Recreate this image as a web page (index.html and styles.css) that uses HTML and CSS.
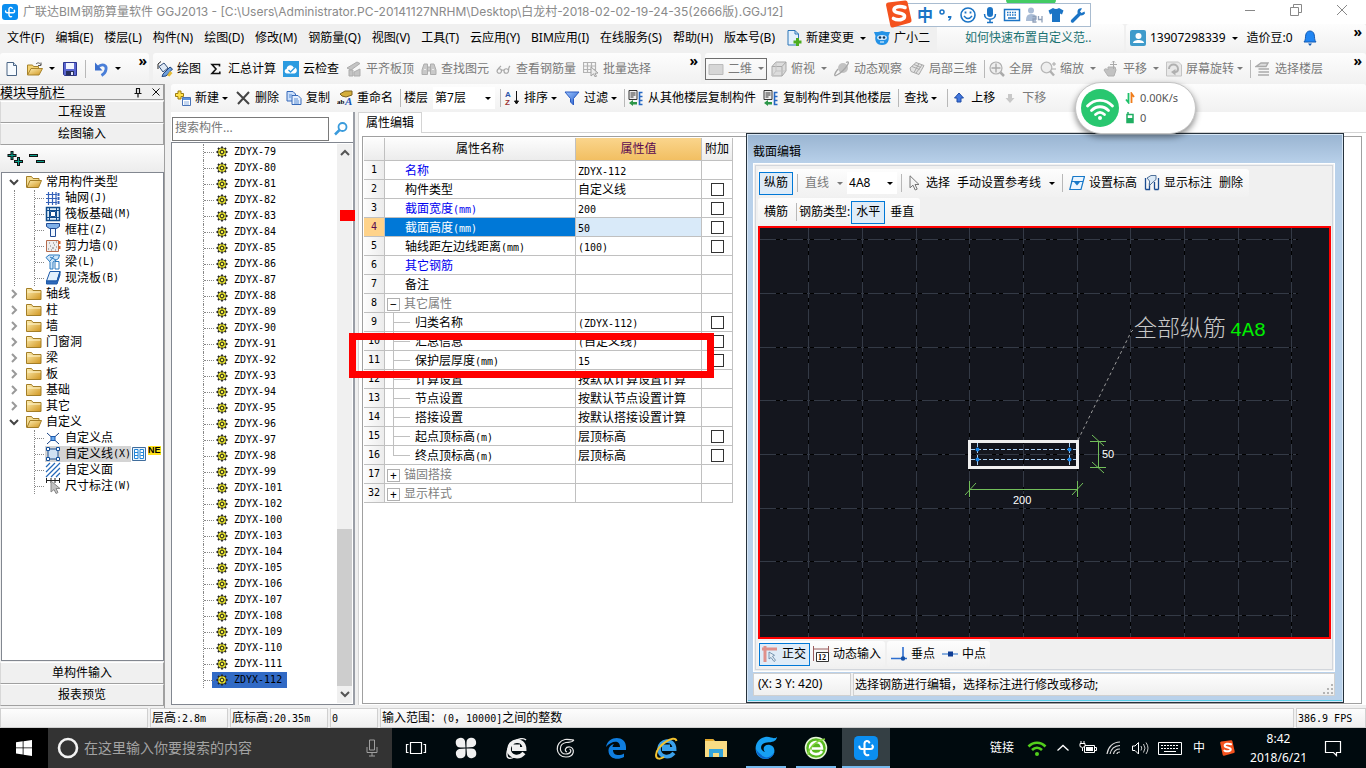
FILE: index.html
```html
<!DOCTYPE html>
<html lang="zh-CN">
<head>
<meta charset="utf-8">
<title>广联达BIM钢筋算量软件 GGJ2013</title>
<link rel="stylesheet" href="styles.css">
</head>
<body>
<svg class="sprite" aria-hidden="true">
  <defs>
    <linearGradient id="gold" x1="0" y1="0" x2="1" y2="1"><stop offset="0" stop-color="#fff0b4"/><stop offset="1" stop-color="#d0951f"/></linearGradient>
    <linearGradient id="blue" x1="0" y1="0" x2="1" y2="1"><stop offset="0" stop-color="#9fc6ff"/><stop offset="1" stop-color="#1c56c8"/></linearGradient>
  </defs>
  <symbol id="app" viewBox="0 0 16 16"><rect width="16" height="16" rx="3" fill="#0b8ef0"/><path d="M10.200 4.300A1.700 1.700 0 0 0 7 4.800v6.400a2 2 0 0 0 2.600 1.500M3.600 7a1.500 1.500 0 0 0 1.500 1.700h6.200a1.400 1.400 0 0 0 .9-2.400" fill="none" stroke="#fff" stroke-width="1.400" stroke-linecap="round"/></symbol>
  <symbol id="new" viewBox="0 0 16 16"><path d="M3 1.500h6.500l3 3v10H3z" fill="#f7fbff" stroke="#4a6484"/><path d="M9.500 1.500v3h3" fill="#cfe0f4" stroke="#4a6484"/></symbol>
  <symbol id="open" viewBox="0 0 16 16"><path d="M.5 14V4h5l1 1.500h5V8" fill="#f4d272" stroke="#a8842c"/><path d="M.5 14 4 7.500h11.500L12 14z" fill="url(#gold)" stroke="#a8842c"/><path d="M9 3c2-2 4-1 5 1m0-2.500V4.500h-3" fill="none" stroke="#555"/></symbol>
  <symbol id="save" viewBox="0 0 16 16"><path d="M1.500 1.500h13v13h-12l-1-1z" fill="#5a66d0" stroke="#2d3590"/><path d="M4 2h8v6H4z" fill="#f2f5ff"/><path d="M4 10h8v4.500H4z" fill="#28305c"/><path d="M9 11h2v3H9z" fill="#dfe4ff"/></symbol>
  <symbol id="undo" viewBox="0 0 16 16"><path d="M5 6c4-4 9-2 8 2.500-.4 2.500-2 4.500-4.500 6" fill="none" stroke="#4a7fd8" stroke-width="2.800"/><path d="M2 1.500v8h7.500z" fill="#3b6fce"/></symbol>
  <symbol id="paint" viewBox="0 0 16 16"><path d="M2 5.500 7 2l4 5-5 4z" fill="#dfe9f5" stroke="#33507c"/><path d="M1 8V3l3-2.500" fill="none" stroke="#222"/><path d="m6 13 7-7 2.500 2-6.500 7-4 .5z" fill="#6fa0dc" stroke="#24477f"/><path d="m13 10 2.500 2-3 3.500-2.500-1z" fill="#e5bb34"/></symbol>
  <symbol id="sum" viewBox="0 0 16 16"><path d="M11.500 5.500V3.500H4L8 8l-4 4.500h7.800v-2" fill="none" stroke="#111" stroke-width="1.600"/></symbol>
  <symbol id="cloud" viewBox="0 0 16 16"><path d="M0 0h16v16H0z" fill="#2c9be0"/><path d="M4 12.500c-3-.5-3-4-.4-4.500C4 4 9 3 10.500 6.500c4-.5 4.500 5 1 6z" fill="#fff"/><path d="m5.500 9 2 2 4.500-4.500" fill="none" stroke="#2c9be0" stroke-width="1.300"/></symbol>
  <symbol id="align" viewBox="0 0 16 16"><path d="m1 7 10-6 3 1.500L5 9zM3 9v6h4V9zm5 2v4h6V8z" fill="#c4c4c4" stroke="#adadad"/></symbol>
  <symbol id="bino" viewBox="0 0 16 16"><path d="M1 13.500V9l2-6h3.500v10.500zm8.500 0V3H13l2 6v4.500zM6.500 6h3v4h-3z" fill="#c9c9c9" stroke="#adadad"/><path d="M3 8.500h2M11 8.500h2" stroke="#eee"/></symbol>
  <symbol id="glass" viewBox="0 0 16 16"><path d="M1 10a2.200 2.200 0 1 0 4.500 0A2.200 2.200 0 1 0 1 10c1-3 3-4 4-5M8 10a2.200 2.200 0 1 0 4.500 0A2.200 2.200 0 1 0 8 10M12.500 10c0-3 0-4 1.500-5M5.500 9.500q1.200-1 2.500 0" fill="none" stroke="#a8a8a8" stroke-width="1.200"/></symbol>
  <symbol id="batch" viewBox="0 0 16 16"><path d="M.5 1.500h12v10H.5zM.5 5h12M.5 8.500h12M4.500 1.500v10M8.500 1.500v10" fill="none" stroke="#b3b3b3" stroke-width="1.200"/><path d="m8 6 7 6-3 .3 1.500 3-1.500.5-1.500-3L8 15z" fill="#ededed" stroke="#a0a0a0"/></symbol>
  <symbol id="flat" viewBox="0 0 16 16"><path d="M1 3.500h14v10H1z" fill="#d6d6d6" stroke="#bbb"/></symbol>
  <symbol id="cube" viewBox="0 0 16 16"><path d="M1 5.500 5 1h10v9l-4 5H1z" fill="#dcdcdc" stroke="#a9a9a9"/><path d="M1 5.500h10V15M11 5.500 15 1" fill="none" stroke="#a9a9a9"/><path d="M5 1v9H15M5 10l-4 5" fill="none" stroke="#c4c4c4"/></symbol>
  <symbol id="orbit" viewBox="0 0 16 16"><circle cx="9" cy="7" r="5" fill="#c2c2c2"/><path d="M4 8c-4 5-4 7-2 6.500C6 13 12 7 14 3c1-2 0-2.500-2-1.500" fill="none" stroke="#a6a6a6" stroke-width="1.300"/></symbol>
  <symbol id="part3d" viewBox="0 0 16 16"><path d="M1 7 7 1.500l8 3-5 9-8-3z" fill="#e3e3e3" stroke="#aaa"/><path d="m5 3.500 7 3M3 5.500l7.500 3M10 2.500l-5 9M7 12l6-8" fill="none" stroke="#aaa"/></symbol>
  <symbol id="full" viewBox="0 0 16 16"><circle cx="7" cy="7" r="6" fill="#eee" stroke="#b0b0b0" stroke-width="1.200"/><path d="M7 2.500v9M2.500 7h9" stroke="#aaa" stroke-width="1.400"/><path d="m11.500 11.500 3.500 3.500" stroke="#aaa" stroke-width="2.500"/></symbol>
  <symbol id="zoomi" viewBox="0 0 16 16"><circle cx="6.500" cy="6.500" r="5.300" fill="#eee" stroke="#b8b8b8" stroke-width="1.300"/><path d="m10 10 4 4.500" stroke="#b0b0b0" stroke-width="2.400"/><path d="M12 3h4M14 1v4M12 8h4" stroke="#aaa"/></symbol>
  <symbol id="pan" viewBox="0 0 16 16"><path d="M1 9c1-2 3-1 4 0V6h7l1 3-2 6H5z" fill="#c2c2c2" stroke="#b0b0b0"/><path d="M10.500 0v8M7 3.500h7" stroke="#aaa"/><path d="m9 1.500 1.500-1.500L12 1.500" fill="none" stroke="#aaa"/></symbol>
  <symbol id="rot" viewBox="0 0 16 16"><path d="M.5 1h12l3 3v11H.5z" fill="#e8e8e8" stroke="#c4c4c4"/><path d="M3 8c0-6 9-6 9 0 0 2-1 3-3 3" fill="none" stroke="#b0b0b0" stroke-width="2"/><path d="M9.500 8v6.500L5 11z" fill="#b0b0b0"/></symbol>
  <symbol id="layers" viewBox="0 0 16 16"><path d="M1 5.500 6 2h7l-2 3.500zM3.500 8H14M3.500 11H14M3 14h11" fill="#ddd" stroke="#aaa" stroke-width="1.400"/></symbol>
  <symbol id="addc" viewBox="0 0 16 16"><path d="M3 1h3v2.500h2.500v3H6V9H3V6.500H.5v-3H3z" fill="#ffe14a" stroke="#9b7b10"/><path d="M7.500 7.500h8v8h-8z" fill="#fff" stroke="#4a74b8"/><path d="M8 8h7v2H8z" fill="#5c93e0"/><path d="M9 12h5M9 14h5" stroke="#8aaee0"/></symbol>
  <symbol id="del" viewBox="0 0 16 16"><path d="m2 2 12 12M14 2 3 14" stroke="#454545" stroke-width="2"/></symbol>
  <symbol id="copy" viewBox="0 0 16 16"><path d="M1 1.500h6l2.500 2.500v7H1z" fill="#c9dffc" stroke="#3669b8"/><path d="M6 5.500h6l3 3v6H6z" fill="#e5f0ff" stroke="#3669b8"/><path d="M8 9h4M8 11h5M8 13h5M3 5h3M3 7h2" stroke="#5d8ed2"/></symbol>
  <symbol id="filter" viewBox="0 0 16 16"><path d="M1 2h14l-5.500 6.500V15L6.500 12V8.500z" fill="url(#blue)" stroke="#2a5ac0"/></symbol>
  <symbol id="fcopy" viewBox="0 0 16 16"><path d="M1 .5h8v9H1z" fill="#eee" stroke="#333"/><path d="M2.500 3h5M2.500 5h5M2.500 7h3" stroke="#333"/><path d="M14.500 2.500h-3v12h3M11.500 6.500h3M11.500 10.500h3" fill="none" stroke="#2567c2" stroke-width="1.600"/><path d="m1 13 4-3v2h4v2.500H5V16z" fill="#2c9648"/></symbol>
  <symbol id="up" viewBox="0 0 16 16"><path d="m8 3 4.500 5H10v4H6V8H3.500z" fill="#4377dd" stroke="#1f4ca6"/></symbol>
  <symbol id="down" viewBox="0 0 16 16"><path d="M8 13 3.500 8H6V4h4v4h2.500z" fill="#c8c8c8"/></symbol>
  <symbol id="docadd" viewBox="0 0 16 16"><path d="M2 .5h7l3.500 3.500v11H2z" fill="#e4f1fd" stroke="#2d76b8"/><path d="M9 .5V4h3.500" fill="none" stroke="#2d76b8"/><path d="M10 8h3v2.500h2.500v3H13V16h-3v-2.500H7.500v-3H10z" fill="#4dad1f"/></symbol>
  <symbol id="mascot" viewBox="0 0 16 16"><path d="M0 2h4l4-1 4 1h4l-1.500 4c1 4-.5 9-6.500 9S.5 10 1.500 6z" fill="#2492e6"/><ellipse cx="8" cy="7.500" rx="5" ry="2.600" fill="#cfe9ff"/><circle cx="6" cy="7.500" r="1.300" fill="#17395c"/><circle cx="10" cy="7.500" r="1.300" fill="#17395c"/><path d="M6 12h4" stroke="#fff"/></symbol>
  <symbol id="user" viewBox="0 0 16 16"><rect width="16" height="16" rx="2" fill="#3f9bcb"/><circle cx="8.500" cy="6" r="3" fill="#fff"/><path d="M3 13c0-4 11-4 11 0z" fill="#fff"/></symbol>
  <symbol id="bell" viewBox="0 0 16 16"><path d="M2 12c2-2 1-5 2-8 1-4 7-4 8 0 1 3 0 6 2 8z" fill="#2186f3" stroke="#125bb4"/><path d="M6 13.500h4L8 16z" fill="#125bb4"/></symbol>
  <symbol id="folder" viewBox="0 0 16 16"><path d="M.5 13.500V2.500h5l1.500 2h8v9z" fill="url(#gold)" stroke="#a37e27"/><path d="M1.500 6h13" stroke="#fff6cf"/></symbol>
  <symbol id="folderopen" viewBox="0 0 16 16"><path d="M.5 13.500V2.500h5l1.500 2h6V7" fill="#f4dc92" stroke="#a37e27"/><path d="m1 13.500 3-7h11.500l-3 7z" fill="url(#gold)" stroke="#a37e27"/></symbol>
  <symbol id="axis" viewBox="0 0 16 16"><path d="M1 4.500h11M1 8.500h11M1 12.500h11M3.500 2v13M7.500 2v13M11 2v13" stroke="#3461b8" stroke-width="1.200"/><path d="M13.500 3v3M13.500 7v3M13.500 11v3" stroke="#3461b8" stroke-width="2"/></symbol>
  <symbol id="raft" viewBox="0 0 16 16"><path d="M1.500 1.500h13v13h-13z" fill="#dcecf8" stroke="#104c8c" stroke-width="1.500"/><path d="M4.500 1.500v13M11.500 1.500v13M1.500 4.500h13M1.500 11.500h13" stroke="#104c8c"/><path d="M5.500 5.500h5v5h-5z" fill="#fff" stroke="#104c8c"/></symbol>
  <symbol id="col" viewBox="0 0 16 16"><path d="M1.500 1.500h13v3l-3 2h-7l-3-2z" fill="#7fb0e8" stroke="#1f4b94"/><path d="M5.500 6.500h5v8h-5z" fill="#eef6ff" stroke="#1f4b94"/></symbol>
  <symbol id="wall" viewBox="0 0 16 16"><path d="M1.500 2.500h12v11h-12z" fill="#eee" stroke="#b56a4c"/><path d="M4 5h1M8 5h1M11 4h1M5 8h1M9 7h1M3 11h1M7 10h2M11 9h1M6 12h1M10 12h1" stroke="#777"/><path d="M14.500 3v10" stroke="#d9632d" stroke-width="2" stroke-dasharray="3 2"/></symbol>
  <symbol id="beam" viewBox="0 0 16 16"><path d="M1 3.500 4 1h10.500l-1 3.500L8 8v7H5V8z" fill="#cfe7fb" stroke="#2a78be"/><path d="M10 7.500h4V15h-4zM5 3l6 3M9 2 5 7" fill="none" stroke="#2a78be"/></symbol>
  <symbol id="slab" viewBox="0 0 16 16"><path d="M5 1.500h10L12 11H1.500z" fill="#e3f1fd" stroke="#1f5aa8"/><path d="M1.500 11H12l3-9.500V5l-3 9H1.500z" fill="#2e69bb" stroke="#1f5aa8"/></symbol>
  <symbol id="cpoint" viewBox="0 0 16 16"><path d="m2 3 12 11M14 3 2 14" stroke="#1a4384"/><path d="M6 6.500h4v4H6z" fill="#6aa9ec" stroke="#1b5ab0"/></symbol>
  <symbol id="cline" viewBox="0 0 16 16"><path d="M3 3h10v10H3z" fill="#cfe0f2" stroke="#20508e"/><path d="M1.500 1.500h3v3h-3zM11.500 1.500h3v3h-3zM1.500 11.500h3v3h-3zM11.500 11.500h3v3h-3z" fill="#fff" stroke="#14509c"/></symbol>
  <symbol id="carea" viewBox="0 0 16 16"><path d="M1 5l4-4M1 10l9-9M1 15 15 1M6 15l9-9M11 15l4-4" stroke="#2468b8" stroke-width="1.200"/></symbol>
  <symbol id="cdim" viewBox="0 0 16 16"><path d="M1.500 0v5M14.500 0v5M1.500 2.500h13M6 0v5M10 0v5" stroke="#222"/><path d="M6 3v11l3-2.500 2 4 2-1-2-4h4z" fill="#c2c2c2" stroke="#888"/></symbol>
  <symbol id="book" viewBox="0 0 14 14"><path d="M.5.5h13v13H.5z" fill="#eaf5ff" stroke="#406d9c"/><path d="M2.500 2.500h3.500v9H2.500zM8 2.500h3.500v9H8z" fill="#fff" stroke="#2285d8"/><path d="M3 5.500h3M3 8.500h3M8.500 5.500h3M8.500 8.500h3" stroke="#2285d8"/></symbol>
  <symbol id="gear" viewBox="0 0 12 12"><path d="M6 .5v11M.5 6h11M2 2l8 8M10 2l-8 8" stroke="#222" stroke-width="1.800"/><circle cx="6" cy="6" r="4.100" fill="#f0ec28" stroke="#222" stroke-width=".6"/><path d="M6 2.500v7M2.500 6h7" stroke="#333" stroke-width=".8"/><path d="M4.500 4.500h3v3h-3z" fill="#f5f03c" stroke="#222" stroke-width=".8"/></symbol>
  <symbol id="lens" viewBox="0 0 16 16"><circle cx="9.500" cy="6" r="4" fill="#fff" stroke="#3a9bdc" stroke-width="1.800"/><path d="m6.500 9-4.500 4.500" stroke="#3a9bdc" stroke-width="2.500"/></symbol>
  <symbol id="cursor" viewBox="0 0 16 16"><path d="M4 .8v12l3-2.600 2.200 4.800 2-.9-2.200-4.600h4z" fill="#f5f5f5" stroke="#777"/></symbol>
  <symbol id="elev" viewBox="0 0 16 16"><path d="M4 1.500h11.500l-3.500 13H.8z" fill="#eaf5ff" stroke="#1778c8" stroke-width="1.200"/><path d="M2 6.500h12" stroke="#1778c8"/><path d="M5 7h6l-3 3.500z" fill="#1778c8"/></symbol>
  <symbol id="marks" viewBox="0 0 16 16"><path d="M1.500 3v11.500M14.500 3v11.500M1.500 14.500h4V8M10.500 14.500V7M10.500 14.500h4" fill="none" stroke="#1c4c90" stroke-width="1.300"/><path d="m3 3 4-2.500h5v4L8 8 5.500 10.500V6z" fill="#dbe9f6" stroke="#50719a"/></symbol>
  <symbol id="ortho" viewBox="0 0 16 16"><path d="M3 0v16M0 3h15" stroke="#e0908a" stroke-width="3"/><path d="M7 6v7l2-1.500 3 4 1.500-1.200-3-4 2-1z" fill="#e3ecf4" stroke="#5d7f9e" stroke-width=".8"/></symbol>
  <symbol id="perp" viewBox="0 0 16 16"><path d="M0 12.500h16M12 1v12" stroke="#2e6fd0" stroke-width="1.600"/><circle cx="12" cy="12.500" r="2.200" fill="#1450a8"/></symbol>
  <symbol id="mid" viewBox="0 0 16 16"><path d="M0 8h16" stroke="#7ca6dc" stroke-width="1.800"/><path d="M6 5.500h5v5H6z" fill="#0f3d94"/></symbol>
  <symbol id="sogou" viewBox="0 0 28 28"><path d="M2 5q0-2 2-2.400L21 .5q2-.3 2.500 1.500L27.500 20q.4 2-1.500 2.800L9 27.500q-2 .5-2.600-1.500z" fill="#f4521e"/><path d="M21 7.500c-5-2-11-1-11 2.500 0 4 10 2 10.500 6 .3 4-7 4.800-11 2.500" fill="none" stroke="#fff" stroke-width="3.600" stroke-linecap="round"/></symbol>
  <symbol id="e" viewBox="0 0 24 24"><path d="M20 17c-5 6-15 4-15-4C5 4 20 1 20.500 13H8M8 10.500h8" fill="none" stroke="currentColor" stroke-width="3.800"/></symbol>
</svg>

<header class="title">
  <svg class="i16"><use href="#app"/></svg>
  <h1>广联达BIM钢筋算量软件 GGJ2013 - [C:\Users\Administrator.PC-20141127NRHM\Desktop\白龙村-2018-02-02-19-24-35(2666版).GGJ12]</h1>
  <div class="winbtns">
    <button aria-label="最小化"><svg viewBox="0 0 12 12"><path d="M1 6.500h10"/></svg></button>
    <button aria-label="还原"><svg viewBox="0 0 12 12"><path d="M.5 3.500h8v8h-8zM3.500 3.500v-3h8v8h-3"/></svg></button>
    <button aria-label="关闭"><svg viewBox="0 0 12 12"><path d="m1 1 10 10M11 1 1 11"/></svg></button>
  </div>
</header>

<nav class="menubar">
  <div class="menus">
    <button>文件(F)</button><button>编辑(E)</button><button>楼层(L)</button><button>构件(N)</button><button>绘图(D)</button><button>修改(M)</button><button>钢筋量(Q)</button><button>视图(V)</button><button>工具(T)</button><button>云应用(Y)</button><button>BIM应用(I)</button><button>在线服务(S)</button><button>帮助(H)</button><button>版本号(B)</button>
    <button class="b"><svg class="i16"><use href="#docadd"/></svg>新建变更<i class="ar"></i></button>
    <button class="b"><svg class="i16"><use href="#mascot"/></svg>广小二</button>
  </div>
  <div class="seg tip"><a href="#">如何快速布置自定义范..</a></div>
  <div class="seg account">
    <button class="b"><svg class="i16"><use href="#user"/></svg>13907298339<i class="ar"></i></button>
    <button>造价豆:0</button>
    <button aria-label="通知"><svg class="i16"><use href="#bell"/></svg></button>
    <span class="more">»</span>
  </div>
</nav>

<div class="bar2">
  <div class="seg filebar">
    <button aria-label="新建"><svg class="i16"><use href="#new"/></svg></button>
    <button class="b" aria-label="打开"><svg class="i16"><use href="#open"/></svg><i class="ar"></i></button>
    <button aria-label="保存"><svg class="i16"><use href="#save"/></svg></button>
    <i class="sep"></i>
    <button class="b" aria-label="撤销"><svg class="i16"><use href="#undo"/></svg><i class="ar"></i></button>
    <span class="more">»</span>
  </div>
  <div class="seg drawbar">
    <button class="b"><svg class="i16"><use href="#paint"/></svg>绘图</button>
    <button class="b"><svg class="i16"><use href="#sum"/></svg>汇总计算</button>
    <button class="b"><svg class="i16"><use href="#cloud"/></svg>云检查</button>
    <button class="b off"><svg class="i16"><use href="#align"/></svg>平齐板顶</button>
    <button class="b off"><svg class="i16"><use href="#bino"/></svg>查找图元</button>
    <button class="b off"><svg class="i16"><use href="#glass"/></svg>查看钢筋量</button>
    <button class="b off"><svg class="i16"><use href="#batch"/></svg>批量选择</button>
    <span class="more">»</span>
  </div>
  <div class="seg viewbar">
    <button class="b off boxed"><svg class="i16"><use href="#flat"/></svg>二维<i class="ar"></i></button>
    <button class="b off"><svg class="i16"><use href="#cube"/></svg>俯视<i class="ar"></i></button>
    <button class="b off"><svg class="i16"><use href="#orbit"/></svg>动态观察</button>
    <button class="b off"><svg class="i16"><use href="#part3d"/></svg>局部三维</button>
    <i class="sep"></i>
    <button class="b off"><svg class="i16"><use href="#full"/></svg>全屏</button>
    <button class="b off"><svg class="i16"><use href="#zoomi"/></svg>缩放<i class="ar"></i></button>
    <button class="b off"><svg class="i16"><use href="#pan"/></svg>平移<i class="ar"></i></button>
    <button class="b off tight"><svg class="i16"><use href="#rot"/></svg>屏幕旋转<i class="ar"></i></button>
    <i class="sep"></i>
    <button class="b off"><svg class="i16"><use href="#layers"/></svg>选择楼层</button>
    <span class="more">»</span>
  </div>
</div>

<main>
  <aside class="nav">
    <div class="navhead"><span>模块导航栏</span>
      <button aria-label="固定"><svg viewBox="0 0 12 12"><path d="M2.500 7.500h7M4 2.500h4M4.500 2.500v5M7.500 2.500v5M6 8v3.500" stroke-width="1.200"/></svg></button>
      <button aria-label="关闭"><svg viewBox="0 0 12 12"><path d="m2.500 2.500 7 7M9.500 2.500l-7 7"/></svg></button>
    </div>
    <button class="tabbtn">工程设置</button>
    <button class="tabbtn">绘图输入</button>
    <div class="pm">
      <button aria-label="全部展开"><svg viewBox="0 0 18 18"><path d="M6 1v9M1.500 5.500h9M12.500 7v9M8 11.500h9" stroke="#111" stroke-width="3"/><path d="M6 2v7M2.500 5.500h7M12.500 8v7M9 11.500h7" stroke="#0aa08c"/></svg></button>
      <button aria-label="全部折叠"><svg viewBox="0 0 18 18"><path d="M1 5.500h9M8 11.500h9" stroke="#111" stroke-width="3"/><path d="M2 5.500h7M9 11.500h7" stroke="#0aa08c"/></svg></button>
    </div>
    <ul class="tree">
      <li class="on"><div class="row"><svg class="chev"><path d="m0 2 4 4 4-4"/></svg><svg class="i16"><use href="#folderopen"/></svg>常用构件类型</div>
        <ul>
          <li><svg class="i16"><use href="#axis"/></svg>轴网<b>(J)</b></li>
          <li><svg class="i16"><use href="#raft"/></svg>筏板基础<b>(M)</b></li>
          <li><svg class="i16"><use href="#col"/></svg>框柱<b>(Z)</b></li>
          <li><svg class="i16"><use href="#wall"/></svg>剪力墙<b>(Q)</b></li>
          <li><svg class="i16"><use href="#beam"/></svg>梁<b>(L)</b></li>
          <li><svg class="i16"><use href="#slab"/></svg>现浇板<b>(B)</b></li>
        </ul></li>
      <li><div class="row"><svg class="chev"><path d="m2 0 4 4-4 4"/></svg><svg class="i16"><use href="#folder"/></svg>轴线</div></li>
      <li><div class="row"><svg class="chev"><path d="m2 0 4 4-4 4"/></svg><svg class="i16"><use href="#folder"/></svg>柱</div></li>
      <li><div class="row"><svg class="chev"><path d="m2 0 4 4-4 4"/></svg><svg class="i16"><use href="#folder"/></svg>墙</div></li>
      <li><div class="row"><svg class="chev"><path d="m2 0 4 4-4 4"/></svg><svg class="i16"><use href="#folder"/></svg>门窗洞</div></li>
      <li><div class="row"><svg class="chev"><path d="m2 0 4 4-4 4"/></svg><svg class="i16"><use href="#folder"/></svg>梁</div></li>
      <li><div class="row"><svg class="chev"><path d="m2 0 4 4-4 4"/></svg><svg class="i16"><use href="#folder"/></svg>板</div></li>
      <li><div class="row"><svg class="chev"><path d="m2 0 4 4-4 4"/></svg><svg class="i16"><use href="#folder"/></svg>基础</div></li>
      <li><div class="row"><svg class="chev"><path d="m2 0 4 4-4 4"/></svg><svg class="i16"><use href="#folder"/></svg>其它</div></li>
      <li class="open"><div class="row"><svg class="chev"><path d="m0 2 4 4 4-4"/></svg><svg class="i16"><use href="#folderopen"/></svg>自定义</div>
        <ul>
          <li><svg class="i16"><use href="#cpoint"/></svg>自定义点</li>
          <li><span class="cur"><svg class="i16"><use href="#cline"/></svg>自定义线<b>(X)</b></span><svg class="i14"><use href="#book"/></svg><em>NE</em></li>
          <li><svg class="i16"><use href="#carea"/></svg>自定义面</li>
          <li><svg class="i16"><use href="#cdim"/></svg>尺寸标注<b>(W)</b></li>
        </ul></li>
    </ul>
    <button class="tabbtn">单构件输入</button>
    <button class="tabbtn">报表预览</button>
  </aside>

  <div class="work">
    <div class="seg bar3">
      <button class="b tight"><svg class="i16"><use href="#addc"/></svg>新建<i class="ar"></i></button>
      <button class="b"><svg class="i16"><use href="#del"/></svg>删除</button>
      <button class="b"><svg class="i16"><use href="#copy"/></svg>复制</button>
      <button class="b"><svg class="i16" viewBox="0 0 16 16"><path d="M3 4 8 1h7v4L9 7 5 6z" fill="#d4ae3c" stroke="#7c6220"/><text x="0" y="14" class="ic-ab">ab</text><text x="8" y="15" class="ic-a">A</text></svg>重命名</button>
      <i class="sep"></i>
      <label for="floor">楼层</label>
      <span class="sel floor"><select id="floor"><option>第7层</option></select></span>
      <i class="sep"></i>
      <button class="b tight"><svg class="i16" viewBox="0 0 16 16"><text x="1" y="7" class="ic-sa">A</text><text x="1" y="15" class="ic-sz">Z</text><path d="M12.500 1v12M10.500 11l2 3 2-3z" fill="#111" stroke="#111"/></svg>排序<i class="ar"></i></button>
      <button class="b tight"><svg class="i16"><use href="#filter"/></svg>过滤<i class="ar"></i></button>
      <i class="sep"></i>
      <button class="b"><svg class="i16"><use href="#fcopy"/></svg>从其他楼层复制构件</button>
      <button class="b"><svg class="i16"><use href="#fcopy"/></svg>复制构件到其他楼层</button>
      <i class="sep"></i>
      <button class="b tight find">查找<i class="ar"></i></button>
      <i class="sep"></i>
      <button class="b"><svg class="i16"><use href="#up"/></svg>上移</button>
      <button class="b off"><svg class="i16"><use href="#down"/></svg>下移</button>
    </div>

    <div class="panes">
      <section class="complist">
        <div class="search"><input type="text" placeholder="搜索构件..." aria-label="搜索构件"><button aria-label="搜索"><svg class="i16"><use href="#lens"/></svg></button></div>
        <div class="listbox">
          <ul class="items">
            <li><svg><use href="#gear"/></svg>ZDYX-79</li>
            <li><svg><use href="#gear"/></svg>ZDYX-80</li>
            <li><svg><use href="#gear"/></svg>ZDYX-81</li>
            <li><svg><use href="#gear"/></svg>ZDYX-82</li>
            <li><svg><use href="#gear"/></svg>ZDYX-83</li>
            <li><svg><use href="#gear"/></svg>ZDYX-84</li>
            <li><svg><use href="#gear"/></svg>ZDYX-85</li>
            <li><svg><use href="#gear"/></svg>ZDYX-86</li>
            <li><svg><use href="#gear"/></svg>ZDYX-87</li>
            <li><svg><use href="#gear"/></svg>ZDYX-88</li>
            <li><svg><use href="#gear"/></svg>ZDYX-89</li>
            <li><svg><use href="#gear"/></svg>ZDYX-90</li>
            <li><svg><use href="#gear"/></svg>ZDYX-91</li>
            <li><svg><use href="#gear"/></svg>ZDYX-92</li>
            <li><svg><use href="#gear"/></svg>ZDYX-93</li>
            <li><svg><use href="#gear"/></svg>ZDYX-94</li>
            <li><svg><use href="#gear"/></svg>ZDYX-95</li>
            <li><svg><use href="#gear"/></svg>ZDYX-96</li>
            <li><svg><use href="#gear"/></svg>ZDYX-97</li>
            <li><svg><use href="#gear"/></svg>ZDYX-98</li>
            <li><svg><use href="#gear"/></svg>ZDYX-99</li>
            <li><svg><use href="#gear"/></svg>ZDYX-101</li>
            <li><svg><use href="#gear"/></svg>ZDYX-102</li>
            <li><svg><use href="#gear"/></svg>ZDYX-100</li>
            <li><svg><use href="#gear"/></svg>ZDYX-103</li>
            <li><svg><use href="#gear"/></svg>ZDYX-104</li>
            <li><svg><use href="#gear"/></svg>ZDYX-105</li>
            <li><svg><use href="#gear"/></svg>ZDYX-106</li>
            <li><svg><use href="#gear"/></svg>ZDYX-107</li>
            <li><svg><use href="#gear"/></svg>ZDYX-108</li>
            <li><svg><use href="#gear"/></svg>ZDYX-109</li>
            <li><svg><use href="#gear"/></svg>ZDYX-110</li>
            <li><svg><use href="#gear"/></svg>ZDYX-111</li>
            <li class="picked"><svg><use href="#gear"/></svg>ZDYX-112</li>
          </ul>
          <div class="scroll"><svg class="chev"><path d="m0 6 4-4 4 4"/></svg><div class="track"><div class="thumb"></div></div><svg class="chev"><path d="m0 2 4 4 4-4"/></svg></div>
        </div>
      </section>

      <section class="props">
        <div class="tabs"><button>属性编辑</button><span></span></div>
        <div class="page"><div class="gridbox">
          <table>
            <thead><tr><th class="c0"></th><th class="c1">属性名称</th><th class="c2">属性值</th><th class="c3">附加</th></tr></thead>
            <tbody>
              <tr><th>1</th><td class="k">名称</td><td><b>ZDYX-112</b></td><td></td></tr>
              <tr><th>2</th><td>构件类型</td><td>自定义线</td><td><input type="checkbox" aria-label="附加 构件类型"></td></tr>
              <tr><th>3</th><td class="k">截面宽度<b>(mm)</b></td><td><b>200</b></td><td><input type="checkbox" aria-label="附加 截面宽度"></td></tr>
              <tr class="active"><th>4</th><td>截面高度<b>(mm)</b></td><td><b>50</b></td><td><input type="checkbox" aria-label="附加 截面高度"></td></tr>
              <tr><th>5</th><td>轴线距左边线距离<b>(mm)</b></td><td><b>(100)</b></td><td><input type="checkbox" aria-label="附加 轴线距左边线距离"></td></tr>
              <tr><th>6</th><td class="k">其它钢筋</td><td></td><td></td></tr>
              <tr><th>7</th><td>备注</td><td></td><td></td></tr>
              <tr class="grp minus"><th>8</th><td><button aria-label="折叠">−</button>其它属性</td><td></td><td></td></tr>
              <tr class="sub"><th>9</th><td>归类名称</td><td><b>(ZDYX-112)</b></td><td><input type="checkbox" aria-label="附加 归类名称"></td></tr>
              <tr class="sub"><th>10</th><td>汇总信息</td><td><b>(</b>自定义线<b>)</b></td><td><input type="checkbox" aria-label="附加 汇总信息"></td></tr>
              <tr class="sub"><th>11</th><td>保护层厚度<b>(mm)</b></td><td><b>15</b></td><td><input type="checkbox" aria-label="附加 保护层厚度"></td></tr>
              <tr class="sub"><th>12</th><td>计算设置</td><td>按默认计算设置计算</td><td></td></tr>
              <tr class="sub"><th>13</th><td>节点设置</td><td>按默认节点设置计算</td><td></td></tr>
              <tr class="sub"><th>14</th><td>搭接设置</td><td>按默认搭接设置计算</td><td></td></tr>
              <tr class="sub"><th>15</th><td>起点顶标高<b>(m)</b></td><td>层顶标高</td><td><input type="checkbox" aria-label="附加 起点顶标高"></td></tr>
              <tr class="sub last"><th>16</th><td>终点顶标高<b>(m)</b></td><td>层顶标高</td><td><input type="checkbox" aria-label="附加 终点顶标高"></td></tr>
              <tr class="grp"><th>17</th><td><button aria-label="展开">+</button>锚固搭接</td><td></td><td></td></tr>
              <tr class="grp"><th>32</th><td><button aria-label="展开">+</button>显示样式</td><td></td><td></td></tr>
            </tbody>
          </table>
        </div></div>
      </section>
    </div>
  </div>
</main>

<footer class="status">
  <span class="s0"></span><span class="s1">层高<b>:2.8m</b></span><span class="s2">底标高<b>:20.35m</b></span><span class="s3"><b>0</b></span><span class="s4">输入范围：<b>(0</b>，<b>10000]</b>之间的整数</span><span class="s5"><b>386.9 FPS</b></span>
</footer>

<div class="taskbar">
  <button class="start" aria-label="开始"><svg viewBox="0 0 16 16"><path d="M0 2.300 6.700 1.300v6.200H0zM7.500 1.200 16 0v7.500H7.500zM0 8.300h6.700v6.300L0 13.600zM7.500 8.300H16V16l-8.500-1.200z" fill="#fff"/></svg></button>
  <label class="cortana"><svg class="ring" viewBox="0 0 22 22"><circle cx="11" cy="11" r="9" fill="none" stroke="#f2f2f2" stroke-width="2.600"/></svg><input type="text" placeholder="在这里输入你要搜索的内容" aria-label="搜索"><svg class="mic" viewBox="0 0 12 18"><path d="M3.500 1h5v10h-5zM1 8v5.500h10V8M6 13.500V17M3 17h6" fill="none" stroke="#a0a0a0"/></svg></label>
  <div class="apps">
    <button aria-label="任务视图"><svg viewBox="0 0 24 24"><path d="M6.500 6.500h11v11h-11zM4.500 8.500h-2v8h2M19.500 8.500h2v8h-2" fill="none" stroke="#fff" stroke-width="1.200"/></svg></button>
    <button aria-label="浏览器"><svg viewBox="0 0 24 24"><path d="M11.500 11.500H6.500A4.800 4.800 0 1 1 11 5zM12.500 11.500V6.500A4.800 4.800 0 1 1 19 11zM12.500 12.500h5A4.800 4.800 0 1 1 13 19zM11.500 12.500v5A4.800 4.800 0 1 1 5 13z" fill="#f0f0f0"/></svg></button>
    <button aria-label="浏览器" class="white"><svg viewBox="0 0 24 24"><use href="#e"/><path d="M22 4C17-1 2 9 3 19c0 4 4 4 7 2" fill="none" stroke="#f0f0f0" stroke-width="1.500"/></svg></button>
    <button aria-label="广联达"><svg viewBox="0 0 24 24"><path d="M20 4c-4 0-5-1-9-.5C0 6 1 21 12 21c9 0 9-9 4-10-5-.5-6 4-3 5M20 4c-2 3-5 2-8 2.500-8 1.500-7 12 0 11.500 5 0 6-4 3.500-5" fill="none" stroke="#e8e8e8" stroke-width="1.200"/></svg></button>
    <button aria-label="Edge" class="edge"><svg viewBox="0 0 24 24"><path d="M2 11C4-1 22-1 22 11v3H9c0 6 7 6 11 3.500V21C13 25 4 22 4.500 14 5 10 8 8.500 10 8c-1 1-1.500 2-1.500 3H16c0-8-9-6-14 0z" fill="#0f7ee0"/></svg></button>
    <button aria-label="IE" class="ie"><svg viewBox="0 0 24 24"><use href="#e"/><path d="M22.500 5C21-2 3 9 2 19c0 5 5 4 8 2" fill="none" stroke="#f2c230" stroke-width="2"/></svg></button>
    <button aria-label="资源管理器"><svg viewBox="0 0 24 24"><path d="M1 3h8l2 2h12v16H1z" fill="#f9dc84"/><path d="M1 3h8l1 2H1z" fill="#e3a82b"/><path d="M5 13h14v8h-4v-4H9v4H5z" fill="#34a5dc"/></svg></button>
    <button aria-label="广联达" class="run"><svg viewBox="0 0 24 24"><path d="M23 1c-4 3-6-1-12 0C-2 4-1 22 11 23c11 0 12-13 5-14-6-1-8 4-5 7-6-2-5-9 2-9.500C18 6 22 6 23 1z" fill="#16a0f2"/><path d="M2 13c1 12 16 13 18.500 3-3 6-10 7-13 3-2-2-4-3-5.500-6z" fill="#0a62c8"/></svg></button>
    <button aria-label="浏览器" class="run"><svg viewBox="0 0 24 24"><circle cx="12" cy="12" r="10.500" fill="#58b820" stroke="#e6f6d8" stroke-width="1.500"/><path d="M18 15c-3 5-12 4-12-3 0-8 12-8 12 .5H8" fill="none" stroke="#fff" stroke-width="2.600"/><path d="M21 3C14 4 5 10 4 19" fill="none" stroke="#84d43f" stroke-width="1.600"/></svg></button>
    <button aria-label="钢筋算量" class="run focus"><svg viewBox="0 0 24 24"><use href="#app"/></svg></button>
  </div>
  <div class="tray">
    <span class="lnk">链接</span>
    <svg class="t20" viewBox="0 0 20 20"><path d="M1.500 8.500c5-5 12-5 17 0M5 12c3-3 7-3 10 0" fill="none" stroke="#52ce1c" stroke-width="2.600"/><circle cx="10" cy="16" r="2" fill="#52ce1c"/></svg>
    <svg class="t14" viewBox="0 0 14 14"><path d="m1.500 9.500 5.500-5 5.500 5" fill="none" stroke="#fff" stroke-width="1.300"/></svg>
    <svg class="t18" viewBox="0 0 18 18"><path d="M5.500 6.500h10v7h-10zM16 8.500h1.500v3H16" fill="none" stroke="#fff"/><path d="M7 8h7v4H7z" fill="#fff"/><path d="M1 4.500h5v3q-2.500 2-5 0zM2 4V2M5 4V2M3.500 9v3" fill="#000" stroke="#fff"/></svg>
    <svg class="t16" viewBox="0 0 16 16"><path d="M1 14C2 7 7 2 14 2M4 14c1-5 4-8 10-8.500M7.500 14c.5-3 3-5 6.500-5M11 14c0-1 1-2 3-2" fill="none" stroke="#ddd" stroke-width="1.200"/></svg>
    <svg class="t18" viewBox="0 0 18 18"><path d="M1.500 7v4.500H4L7.500 15V3.500L4 7z" fill="none" stroke="#fff"/><path d="M10 7q1.500 2 0 4.500M12.500 5q3 4 0 8.500M15 3.500q4 5.500 0 11.500" fill="none" stroke="#ccc"/></svg>
    <svg class="t24" viewBox="0 0 24 16"><path d="M.5 2.500h23v12H.5z" fill="none" stroke="#fff"/><path d="M3 5.500h18M3 8.500h18" stroke="#fff" stroke-dasharray="2 1"/><path d="M6 11.500h12" stroke="#fff"/></svg>
    <span class="ime">中</span>
    <svg class="t16" viewBox="0 0 28 28"><use href="#sogou"/></svg>
    <time>8:42<br>2018/6/21</time>
    <button aria-label="通知中心"><svg class="t18" viewBox="0 0 18 18"><path d="M1.500 2.500h15v11h-4v3l-3-3h-8z" fill="none" stroke="#fff" stroke-width="1.200"/></svg></button>
  </div>
</div>

<div class="float" role="dialog" aria-label="截面编辑">
  <h2>截面编辑</h2>
  <div class="fbody">
    <div class="frow">
      <div class="seg f1">
        <button class="tog">纵筋</button><i class="sep"></i>
        <button class="b off">直线<i class="ar"></i></button>
        <span class="sel dia"><select aria-label="钢筋直径"><option>4A8</option></select></span>
        <i class="sep"></i>
        <button class="b"><svg class="i16"><use href="#cursor"/></svg>选择</button>
        <button class="b">手动设置参考线<i class="ar"></i></button>
        <i class="sep"></i>
        <button class="b"><svg class="i16"><use href="#elev"/></svg>设置标高</button>
        <button class="b"><svg class="i16"><use href="#marks"/></svg>显示标注</button>
        <button>删除</button>
      </div>
    </div>
    <div class="frow second">
      <div class="seg f2"><button>横筋</button><i class="sep"></i><span>钢筋类型:</span><button class="tog">水平</button><button>垂直</button></div>
    </div>
    <svg class="canvas" viewBox="760 228 569 409" preserveAspectRatio="xMinYMin meet">
      <g class="gridk"><path d="M808.500 228v409M862.500 228v409M916.500 228v409M969.500 228v409M1023.500 228v409M1077.500 228v409M1130.500 228v409M1184.500 228v409M1238.500 228v409M1291.500 228v409M760 239.500h538M760 293.500h538M760 347.500h538M760 400.500h538M760 454.500h538M760 508.500h538M760 561.500h538M760 615.500h538"/></g>
      <g class="gridd"><path d="M808.500 228v409M862.500 228v409M916.500 228v409M969.500 228v409M1023.500 228v409M1077.500 228v409M1130.500 228v409M1184.500 228v409M1238.500 228v409M1291.500 228v409M760 239.500h538M760 293.500h538M760 347.500h538M760 400.500h538M760 454.500h538M760 508.500h538M760 561.500h538M760 615.500h538"/></g>
      <path class="leader" d="M1078 440l53-108 4-4"/>
      <rect class="sec" x="969.500" y="441.500" width="108" height="26"/>
      <path class="bars" d="M971 449.500h105M971 459.500h105M977.500 443v23M1069.500 443v23"/>
      <g fill="#1684e8"><circle cx="977.500" cy="449.500" r="2"/><circle cx="1069.500" cy="449.500" r="2"/><circle cx="977.500" cy="459.500" r="2"/><circle cx="1069.500" cy="459.500" r="2"/></g>
      <path class="dim" d="M1098.500 441v27M1090 441.500h16M1090 467.500h16M1092 435l12 11M1092 462l12 11M969 489.500h109M969.500 481v16M1077.500 481v16M965 495l11-12M1072 495l11-12"/>
      <text class="num" x="1102" y="458">50</text><text class="num" x="1013" y="504">200</text>
      <text class="big" x="1134" y="336">全部纵筋</text><text class="grn" x="1230" y="336">4A8</text>
    </svg>
    <div class="frow foot">
      <div class="seg f3"><button class="b tog"><svg class="i16"><use href="#ortho"/></svg>正交</button><button class="b"><svg class="i16" viewBox="0 0 16 16"><path d="M.5 0v15M15.500 0v7M.5 3h15" stroke="#9a5b5b"/><path d="M3.500 6.500h12v9h-12z" fill="#fff" stroke="#333"/><text x="5" y="14" class="ic-12">12</text></svg>动态输入</button></div>
      <div class="seg f4"><button class="b"><svg class="i16"><use href="#perp"/></svg>垂点</button><button class="b"><svg class="i16"><use href="#mid"/></svg>中点</button></div>
    </div>
  </div>
  <div class="fstatus"><span>(X: 3 Y: 420)</span><span>选择钢筋进行编辑，选择标注进行修改或移动;<svg viewBox="0 0 11 11"><path d="M8 0h2v2H8zM4 4h2v2H4zM8 4h2v2H8zM0 8h2v2H0zM4 8h2v2H4zM8 8h2v2H8z" fill="#b4b4b4"/></svg></span></div>
</div>

<div class="note"></div>
<div class="dot"></div>

<div class="imebar">
  <i class="blob"></i>
  <svg class="logo" viewBox="0 0 28 28"><use href="#sogou"/></svg>
  <div class="imeicons">
    <strong>中</strong>
    <svg viewBox="0 0 18 18"><circle cx="5" cy="6" r="2" fill="none" stroke="#1b74c5" stroke-width="1.500"/><path d="M11 10h3.500q0 4-3 5v-1.500q1-.5 1-1.500H11z" fill="#1b74c5"/></svg>
    <svg viewBox="0 0 18 18"><circle cx="9" cy="9" r="7" fill="none" stroke="#1b74c5" stroke-width="1.600"/><path d="M5 10q4 5 8 0" fill="none" stroke="#1b74c5" stroke-width="1.400"/><path d="M6.500 5.500v2M11.500 5.500v2" stroke="#1b74c5" stroke-width="1.800"/></svg>
    <svg viewBox="0 0 18 18"><rect x="6" y="1" width="6" height="10" rx="3" fill="#1b74c5"/><path d="M3.500 8c0 7 11 7 11 0M9 13v4M6 16.500h6" fill="none" stroke="#1b74c5" stroke-width="1.500"/></svg>
    <svg viewBox="0 0 18 18"><path d="M1.500 3.500h15v11h-15z" fill="none" stroke="#1b74c5" stroke-width="1.500"/><path d="M4 6.500h10M4 9h10" stroke="#1b74c5" stroke-width="1.500" stroke-dasharray="1.500 1"/><path d="M5 12h8" stroke="#1b74c5" stroke-width="1.500"/></svg>
    <svg viewBox="0 0 18 18"><circle cx="6" cy="4.500" r="3" fill="#a9bcd6"/><path d="M1 14q0-6 5-6t5 3v4H1z" fill="#a9bcd6"/><path d="M7.500 10.500h3.500v2.500H8v3h3.500M13.500 10v3.500h3.500M17 10v6.500" fill="none" stroke="#8f9fb8" stroke-width="1.300"/></svg>
    <svg viewBox="0 0 18 18"><path d="M1.500 4.500 6 2q3 2 6 0l4.500 2.500L15 8.500l-2-1V16H5V7.500l-2 1z" fill="#1b74c5"/></svg>
    <svg viewBox="0 0 18 18"><path d="m3.500 15 7-7" stroke="#1b74c5" stroke-width="3.400" stroke-linecap="round"/><path d="M15.500 5.500 12.500 7 11 5.500 13 2.500C9.500 1.500 7.500 5 9 8q4 3 7-.5z" fill="#1b74c5"/></svg>
  </div>
</div>

<div class="bubble">
  <svg class="wifi" viewBox="0 0 38 38"><circle cx="19" cy="19" r="19" fill="#28c76f"/><path d="M6.500 17c7-7.500 18-7.500 25 0M10.500 21.500c5-5 12-5 17 0M14.500 25.500c3-2.800 6-2.800 9 0" fill="none" stroke="#fff" stroke-width="2.800" stroke-linecap="round"/><circle cx="19" cy="29" r="2" fill="#fff"/></svg>
  <dl><dt><svg viewBox="0 0 12 12"><path d="M4.500 1v9.500L2 7.500" fill="none" stroke="#1fc06a" stroke-width="1.800"/><path d="M7.500 11V1.500L10 5" fill="none" stroke="#f07c1a" stroke-width="1.800"/></svg></dt><dd>0.00K/s</dd><dt><svg viewBox="0 0 12 12"><path d="M3 2.500h6v8H3zM4 0v2" fill="none" stroke="#1fae62" stroke-width="1.500"/><path d="M3 6h6v5H3z" fill="#1fae62"/></svg></dt><dd>0</dd></dl>
</div>
</body>
</html>
```
FILE: styles.css
```css
* { box-sizing: border-box; }
body {
  margin: 0; height: 100vh; display: flex; flex-direction: column; overflow: hidden; position: relative;
  background: #f0f0f0; color: #000;
  font: 12px/16px "Noto Sans", "Noto Sans CJK SC", sans-serif;
}
button, input, select { font: inherit; color: inherit; margin: 0; padding: 0; border: 0; background: none; border-radius: 0; }
button { white-space: nowrap; }
ul { list-style: none; margin: 0; padding: 0; }
b { font: 10px/16px "DejaVu Sans Mono", monospace; }
svg { display: block; flex: none; }
.sprite { position: absolute; width: 0; height: 0; }
.i16 { width: 16px; height: 16px; }
.i14 { width: 14px; height: 14px; }
.ic-ab { font: bold 7px "Liberation Serif", serif; }
.ic-a { font: italic bold 11px "Liberation Serif", serif; fill: #1c55b4; }
.ic-sa { font: bold 8px "Liberation Sans", sans-serif; fill: #2a55a8; }
.ic-sz { font: bold 8px "Liberation Sans", sans-serif; fill: #9c3434; }
.ic-12 { font: bold 8px "Liberation Serif", serif; }

/* shared toolbar parts */
.seg { display: flex; align-items: center; background: linear-gradient(#fdfdfd, #f1f1f1); border-radius: 3px; }
.b { display: flex; align-items: center; gap: 4px; }
.off { color: #7a7a7a; }
.ar { width: 6px; height: 3px; margin-left: 2px; border: 3px solid transparent; border-top-color: currentColor; border-bottom: 0; }
.tight .ar { margin-left: -1px; }
.sep { width: 1px; height: 18px; background: #b8b8b8; flex: none; }
.more { align-self: flex-start; margin-left: auto; padding-top: 1px; font: bold 14px/14px "Noto Sans", sans-serif; }
.sel { position: relative; display: flex; background: #fff; }
.sel select { width: 100%; appearance: none; padding-left: 2px; }
.sel::after { content: ""; position: absolute; right: 4px; top: 10px; border: 3px solid transparent; border-top-color: #000; border-bottom: 0; pointer-events: none; }

.title { display: flex; align-items: center; height: 24px; background: #fff; padding: 0 18px 0 2px; }
.title h1 { margin: 0 0 0 5px; font: 12px/16px Inter, "Noto Sans CJK SC", sans-serif; color: #8a8a8a; white-space: nowrap; }
.winbtns { margin-left: auto; display: flex; gap: 34px; padding-bottom: 4px; }
.winbtns svg { width: 12px; height: 12px; fill: none; stroke: #888; }

.menubar { display: flex; height: 29px; padding-bottom: 1px; }
.menus { display: flex; align-items: center; gap: 11px; padding-left: 7px; width: 937px; flex: none; }
.menus .b { margin-right: -3px; }
.tip { width: 187px; padding-left: 28px; margin-right: 2px; flex: none; }
.tip a { color: #1a7272; text-decoration: none; }
.account { flex: 1; gap: 9px; padding: 0 4px; }

.bar2 { display: flex; height: 31px; gap: 4px; }
.bar2 .seg { padding: 0 4px; gap: 7px; }
.bar2 .filebar { width: 149px; padding-right: 2px; }
.bar2 .drawbar { width: 548px; padding-right: 3px; }
.bar2 .viewbar { flex: 1; padding-left: 0; }
.bar2 .boxed { height: 22px; width: 62px; border: 1px solid #6e6e6e; padding-left: 2px; margin-right: -3px; }
.viewbar .sep { margin-right: -3px; }

main { flex: 1; display: flex; min-height: 0; gap: 6px; }
.nav { width: 165px; display: flex; flex-direction: column; border-right: 1px solid #a0a0a0; padding-bottom: 2px; flex: none; }
.navhead { display: flex; align-items: center; height: 16px; border: 1px solid #9b9b9b; border-left: 0; gap: 6px; padding-right: 1px; margin-bottom: 1px; }
.navhead span { flex: 1; font-size: 13px; }
.navhead svg { width: 12px; height: 12px; fill: none; stroke: #111; }
.tabbtn { height: 22px; border: 1px solid #a0a0a0; border-top-color: #fff; border-left-color: #d8d8d8; background: #f0f0f0; flex: none; }
.pm { display: flex; gap: 4px; height: 27px; align-items: center; padding-left: 6px; background: linear-gradient(#fdfdfd, #ececec); flex: none; }
.pm svg { width: 18px; height: 18px; }
.tree { flex: 1; margin: 0 0 1px 1px; border: 1px solid #828790; background: #fff; padding-top: 1px; overflow: hidden; }
.row { display: flex; align-items: center; height: 16px; padding-left: 8px; gap: 4px; white-space: nowrap; }
.row .chev { margin-right: 4px; }
.chev { width: 8px; height: 8px; fill: none; stroke: #999; stroke-width: 2; overflow: visible; }
.on > .row .chev, .open > .row .chev { stroke: #444; }
.tree ul { margin-left: 32px; padding: 0; }
.tree .on > ul { margin-left: 12px; border-left: 1px dotted #888; padding-left: 19px; }
.tree ul li { display: flex; align-items: center; height: 16px; white-space: nowrap; border-left: 1px dotted #888; }
.tree ul li > svg.i16:first-of-type { margin-right: 4px; }
.tree ul li::before { content: ""; width: 9px; border-top: 1px dotted #888; margin-right: 1px; flex: none; }
.cur { display: flex; align-items: center; background: #d4d4d4; height: 16px; }
.cur svg { margin-right: 4px; }
.tree em { font: bold 9px/9px "Liberation Sans", sans-serif; background: #ffe01a; align-self: flex-start; margin-left: 1px; }
.tree ul li .i14 { margin: 0 1px; }

.work { flex: 1; display: flex; flex-direction: column; min-width: 0; }
.bar3 { height: 28px; gap: 7px; padding-left: 4px; flex: none; }
.bar3 .sep { margin-right: -4px; }
.floor { width: 62px; margin-left: -2px; height: 22px; }
.bar3 .floor + .sep { margin-left: -2px; }
.find { margin: 0 3px 0 2px; }
.panes { flex: 1; display: flex; min-height: 0; gap: 3px; }
.complist { width: 184px; display: flex; flex-direction: column; flex: none; border-right: 2px solid #9a9ea6; padding-top: 4px; background: #fff; margin-bottom: 3px; }
.search { display: flex; align-items: center; height: 25px; gap: 4px; padding-left: 1px; }
.search input { width: 157px; height: 24px; border: 1px solid #7a7a7a; padding: 0 2px 2px; background: #fff; flex: none; }
.search input::placeholder { color: #777; opacity: 1; }
.listbox { flex: 1; display: flex; min-height: 0; border: 1px solid #828790; border-right: 0; margin-top: 1px; padding: 1px 1px 1px 0; }
.items { flex: 1; font: 10px/16px "DejaVu Sans Mono", monospace; overflow: hidden; }
.items li { display: flex; align-items: center; height: 16px; margin-left: 31px; border-left: 1px dotted #888; }
.items li::before { content: ""; width: 10px; border-top: 1px dotted #888; margin-right: 2px; }
.items svg { width: 12px; height: 12px; margin-right: 6px; }
.picked { background: linear-gradient(#316ac5, #316ac5) 8px 0 / 75px 16px no-repeat; }
.scroll { width: 15px; background: #f0f0f0; display: flex; flex-direction: column; align-items: center; padding: 5px 0; gap: 4px; }
.scroll .chev { stroke: #555; }
.track { flex: 1; width: 100%; display: flex; align-items: flex-end; }
.thumb { width: 100%; height: 30%; background: #cdcdcd; }

.props { flex: 1; display: flex; flex-direction: column; min-width: 0; background: #fff; margin-bottom: 3px; }
.tabs { display: flex; height: 21px; flex: none; }
.tabs button { width: 64px; border: 1px solid #d4d4d4; border-bottom: 0; background: #fff; }
.tabs span { flex: 1; border-bottom: 1px solid #d4d4d4; }
.page { flex: 1; display: flex; border-left: 1px solid #d4d4d4; padding: 3px 4px 1px 3px; min-height: 0; }
.gridbox { flex: 1; border: 1px solid #a0a0a0; padding: 1px 0 0 1px; overflow: hidden; }
table { border-collapse: separate; border-spacing: 0; table-layout: fixed; width: 369px; }
.c0 { width: 21px; } .c1 { width: 191px; } .c2 { width: 126px; } .c3 { width: 31px; }
th, td { border: solid #c0c0c0; border-width: 0 1px 1px 0; padding: 0; height: 19px; line-height: 16px; white-space: nowrap; text-align: left; font-weight: 400; overflow: hidden; }
thead th { height: 23px; text-align: center; background: linear-gradient(#fdfdfd, #ececec); }
thead .c2 { background: linear-gradient(#fad58c, #f2bf62); color: #5a0a50; }
tbody th { background: linear-gradient(90deg, #fdfdfd, #ececec); text-align: center; font: 10px/16px "DejaVu Sans Mono", monospace; }
td b { line-height: 12px; }
td:nth-child(2) { padding: 1px 0 0 20px; }
td:nth-child(3) { padding: 1px 0 0 2px; }
td:nth-child(4) { padding-left: 9px; }
.k { color: #0000f0; }
.active th { background: #ffd38a; color: #5a0a50; }
.active td:nth-child(2) { background: #0078d7; color: #fff; }
.active td:nth-child(3) { background: #d9eaf9; }
table input { display: block; appearance: none; width: 13px; height: 13px; border: 1px solid #333; background: #fff; }
.grp td { color: #808080; }
.grp td:nth-child(2) { padding-left: 2px; }
.grp button { width: 13px; height: 13px; border: 1px solid #b0b0b0; background: #fff; color: #000; line-height: 9px; margin-right: 4px; vertical-align: middle; }
.sub td:nth-child(2) { padding-left: 30px; background: linear-gradient(#c0c0c0, #c0c0c0) 8px 9px / 17px 1px no-repeat, linear-gradient(#c0c0c0, #c0c0c0) 8px 0 / 1px 19px no-repeat; }
.sub.last td:nth-child(2) { background-size: 17px 1px, 1px 9px; }

.status { display: flex; gap: 2px; height: 20px; flex: none; }
.status span { border: 1px solid #d0d0d0; background: linear-gradient(#fdfdfd, #efefef); padding-left: 1px; line-height: 18px; white-space: nowrap; }
.s0 { width: 148px; } .s1 { width: 78px; } .s2 { width: 98px; } .s3 { width: 48px; } .s4 { flex: 1; } .s5 { width: 70px; }

.taskbar { display: flex; height: 40px; background: #000a0e; color: #fff; flex: none; }
.start { width: 48px; display: grid; place-items: center; background: #000; }
.start svg { width: 16px; height: 16px; }
.cortana { width: 344px; display: flex; align-items: center; background: #333; padding: 0 14px 0 9px; gap: 5px; }
.cortana input { flex: 1; font-size: 14px; min-width: 0; }
.cortana input::placeholder { color: #a3a3a3; opacity: 1; }
.ring { width: 22px; height: 22px; }
.mic { width: 12px; height: 18px; }
.apps { display: flex; }
.apps button { width: 48px; margin-right: 2px; height: 40px; display: grid; place-items: center; border-bottom: 2px solid transparent; padding-top: 2px; }
.apps svg { width: 24px; height: 24px; }
.white { color: #f0f0f0; }
.ie { color: #3aa0ea; }
.apps .run { background: linear-gradient(#76b9ed, #76b9ed) center 38px / 40px 2px no-repeat; background-origin: border-box; background-clip: border-box; }
.apps .focus { background: #343f44; border-bottom-color: #76b9ed; }
.tray { margin-left: auto; display: flex; align-items: center; gap: 9px; padding-right: 24px; }
.t14 { width: 14px; height: 14px; } .t16 { width: 16px; height: 16px; } .t18 { width: 18px; height: 18px; } .t20 { width: 20px; height: 20px; } .t24 { width: 24px; height: 16px; }
.lnk { margin-right: 4px; }
.tray .t24 + .ime { margin: 0 5px 0 2px; }
.tray time { text-align: center; line-height: 19px; margin: 0 8px 0 6px; }

.float { position: absolute; left: 746px; top: 133px; width: 598px; height: 570px; display: flex; flex-direction: column; border: 1px solid #26323c; background: linear-gradient(#99b4d1, #b9d1ea 30px); box-shadow: inset 0 0 0 1px #d7e6f5, inset 0 -2px 0 #56cde8; padding: 2px 8px 7px 6px; }
.float h2 { margin: 0; font-size: 12px; font-weight: 400; line-height: 32px; height: 27px; }
.fbody { flex: 1; display: flex; flex-direction: column; background: #f0f0f0; border: 1px solid #fff; outline: 1px solid #d2d6dc; outline-offset: -3px; padding: 5px 3px 4px 4px; }
.frow { display: flex; gap: 2px; height: 29px; flex: none; }
.second { height: 28px; }
.float .seg { height: 28px; }
.tog { height: 23px; border: 1px solid #0078d7; background: #dfecf8; padding: 0 4px; }
.f1 { padding: 0 6px 0 1px; gap: 7px; }
.f1 .tog { margin-right: -3px; }
.f1 .ar { margin-left: 4px; }
.f1 .off { margin-right: -3px; }
.dia { width: 50px; height: 22px; }
.dia + .sep { margin-left: -3px; margin-right: -3px; }
.f1 .b + .sep { margin-right: -1px; }
.f2 { padding: 0 6px; gap: 2px; }
.f2 .sep { margin-left: 6px; }
.f2 span { margin-right: -1px; }
.f2 .tog { margin-right: 3px; }
.canvas { flex: 1; width: 100%; min-height: 0; border: 2px solid #f00; background: #14161e; }
.gridk path { stroke: #000; fill: none; }
.gridd path { stroke: #343a46; fill: none; stroke-dasharray: 16 4 3 4; }
.leader { fill: none; stroke: #9a9a9a; stroke-dasharray: 3 3; }
.sec { fill: none; stroke: #f0f0f0; stroke-width: 3; }
.bars { stroke: #a8cdf0; stroke-dasharray: 4 2; }
.dim { stroke: #72bf5a; fill: none; }
.num { font: 11px "Liberation Sans", sans-serif; fill: #fff; }
.big { font: 300 23px "Noto Sans CJK SC", sans-serif; fill: #c8c8c8; }
.grn { font: 20px "Liberation Mono", monospace; fill: #00f000; }
.foot { margin-top: 2px; height: 26px; }
.foot .seg { padding: 0 4px; gap: 7px; height: 26px; }
.foot .f3 { padding-left: 1px; }
.f3 .tog { margin-right: -4px; padding: 0 3px 0 2px; }
.fstatus { display: flex; gap: 2px; height: 23px; margin-top: 1px; background: #f0f0f0; flex: none; }
.fstatus span { border: 1px solid #d0d0d0; background: linear-gradient(#fdfdfd, #efefef); line-height: 20px; white-space: nowrap; }
.fstatus span:first-child { width: 98px; padding-left: 4px; }
.fstatus span:last-child { flex: 1; padding-left: 1px; display: flex; justify-content: space-between; align-items: flex-end; }
.fstatus svg { width: 11px; height: 11px; }

.note { position: absolute; left: 349px; top: 333px; width: 365px; height: 45px; border: 7px solid #f00; }
.dot { position: absolute; left: 340px; top: 210px; width: 15px; height: 11px; background: #f00; }

.imebar { position: absolute; left: 884px; top: 0; width: 207px; height: 27px; }
.blob { position: absolute; left: 122px; top: 0; width: 50px; height: 5px; background: #43cb63; border-radius: 0 0 12px 12px; }
.imeicons { position: absolute; inset: 3px 0 0 8px; display: flex; align-items: center; gap: 4px; padding-left: 24px; background: #fff; border: 1px solid #a9bcd0; color: #1b74c5; }
.imeicons strong { font-size: 16px; line-height: 20px; }
.imeicons svg { width: 18px; height: 18px; }
.logo { position: absolute; left: 0; top: 0; z-index: 1; width: 28px; height: 28px; }

.bubble { position: absolute; left: 1075px; top: 82px; width: 121px; height: 52px; border-radius: 26px; background: #fff; border: 1px solid #c4c4c4; box-shadow: 0 3px 6px rgba(0, 0, 0, .45); display: flex; align-items: center; gap: 5px; padding-left: 5px; }
.wifi { width: 38px; height: 38px; }
.bubble dl { margin: 0; display: grid; grid-template-columns: 12px auto; gap: 4px; align-items: center; color: #555; font-size: 11px; }
.bubble dd { margin: 0; }
.bubble dl svg { width: 12px; height: 12px; }
```
